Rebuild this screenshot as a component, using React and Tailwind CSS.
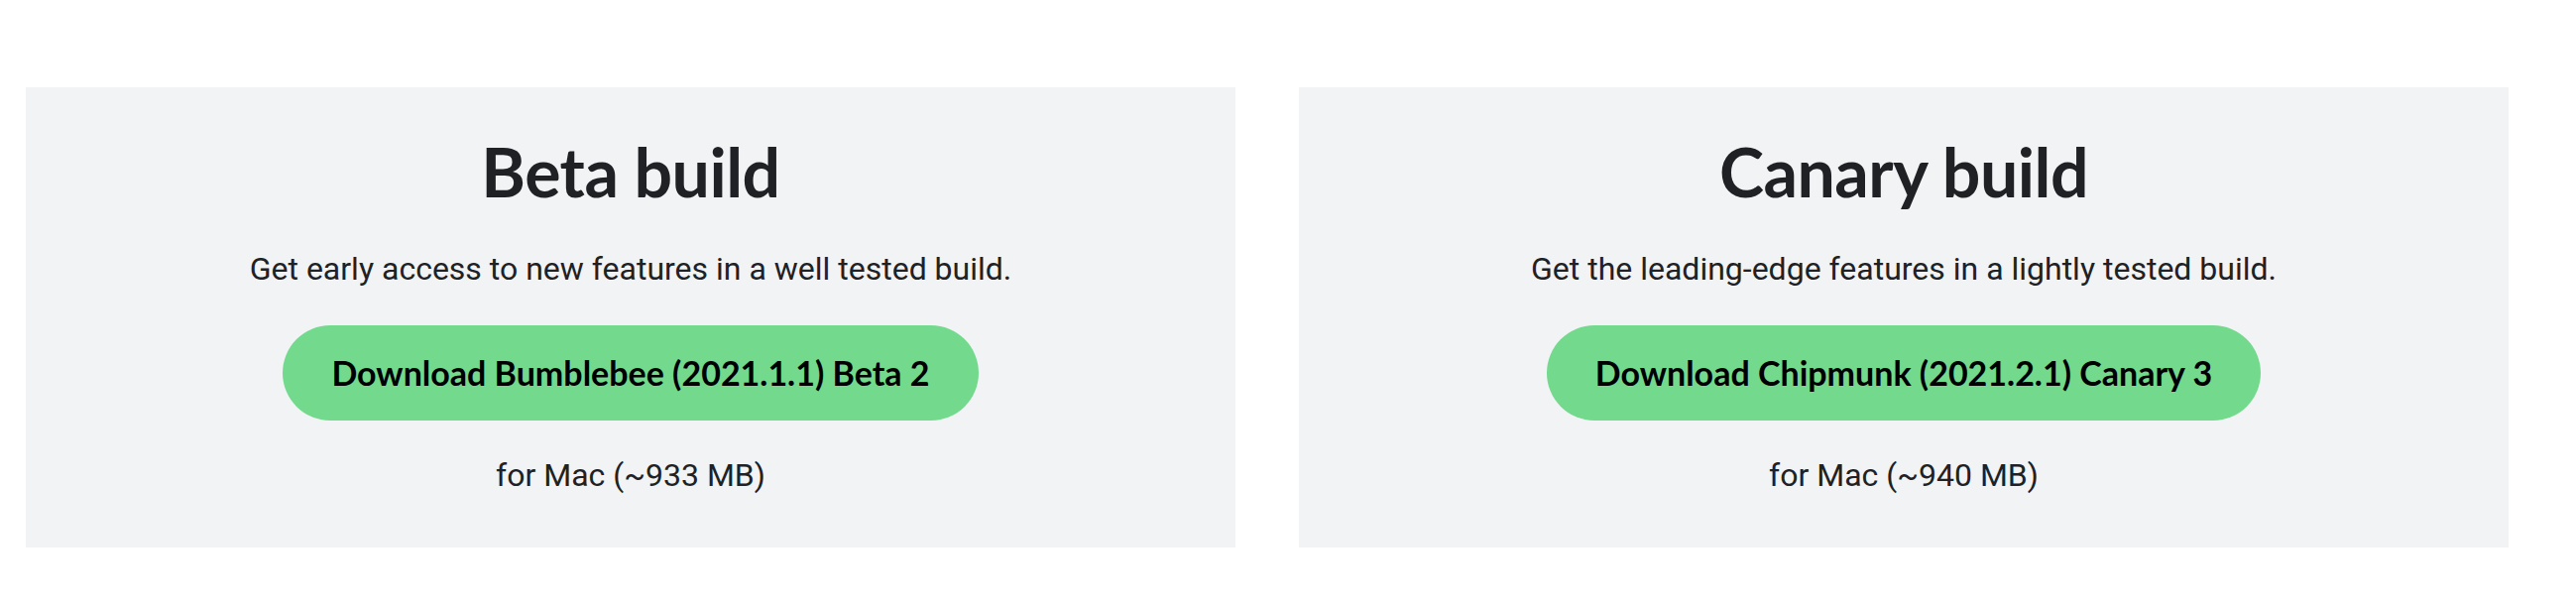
export default function App() {
  const cards = [
    {
      title: "Beta build",
      desc: "Get early access to new features in a well tested build.",
      button: "Download Bumblebee (2021.1.1) Beta 2",
      size: "for Mac (~933 MB)",
    },
    {
      title: "Canary build",
      desc: "Get the leading-edge features in a lightly tested build.",
      button: "Download Chipmunk (2021.2.1) Canary 3",
      size: "for Mac (~940 MB)",
    },
  ];
  return (
    <div className="w-[2598px] h-[612px] bg-white flex gap-[64px] pl-[26px] pt-[88px]">
      {cards.map((c) => (
        <div
          key={c.title}
          className="w-[1220px] h-[464px] bg-[#f1f3f4] flex flex-col items-center pt-[51px] text-[#202124]"
        >
          <h2 className="font-['Lato',sans-serif] font-bold text-[68px] leading-none tracking-[-0.5px]">
            {c.title}
          </h2>
          <p className="mt-[48px] font-['Roboto',sans-serif] text-[32px] leading-none">
            {c.desc}
          </p>
          <button className="mt-[41px] h-[96px] px-[49px] rounded-full bg-[#72d98d] text-black font-['Lato',sans-serif] font-bold text-[34px] leading-none">
            {c.button}
          </button>
          <p className="mt-[39px] font-['Roboto',sans-serif] text-[32px] leading-none">
            {c.size}
          </p>
        </div>
      ))}
    </div>
  );
}
